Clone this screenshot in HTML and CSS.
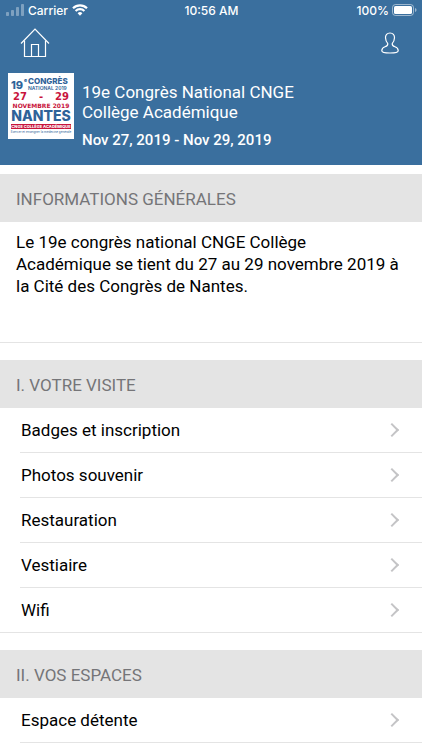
FILE: index.html
```html
<!DOCTYPE html>
<html lang="fr">
<head>
  <meta charset="UTF-8" />
  <meta name="viewport" content="width=device-width, initial-scale=1.0"/>
  <title>19e Congrès National CNGE</title>
  <link rel="stylesheet" href="styles.css">
</head>
<body>

  <!-- HEADER -->
  <header class="header">
    <div class="status-bar">
      <div class="status-left">
        <svg class="signal" width="18" height="12" viewBox="0 0 18 12" fill="#fff" fill-opacity="0.35">
          <rect x="0" y="8" width="3" height="4" rx="0.8"/>
          <rect x="5" y="6" width="3" height="6" rx="0.8"/>
          <rect x="10" y="3" width="3" height="9" rx="0.8"/>
          <rect x="15" y="0" width="3" height="12" rx="0.8"/>
        </svg>
        <span>Carrier</span>
        <svg width="16" height="12" viewBox="0 0 16 12" fill="none" stroke="#fff" stroke-width="2.2">
          <path d="M1 4.3 A10 10 0 0 1 15 4.3"/>
          <path d="M3.6 7 A6.3 6.3 0 0 1 12.4 7"/>
          <path d="M8 11.7 L5.6 9.2 A3.4 3.4 0 0 1 10.4 9.2 Z" fill="#fff" stroke="none"/>
        </svg>
      </div>
      <span>10:56 AM</span>
      <div class="status-right">
        <span>100%</span>
        <svg width="25" height="12" viewBox="0 0 25 12">
          <rect x="0.5" y="0.5" width="21" height="11" rx="3" fill="none" stroke="#fff" stroke-opacity="0.5"/>
          <rect x="2" y="2" width="18" height="8" rx="1.6" fill="#fff"/>
          <path d="M23 4 Q24.6 4.6 24.6 6 Q24.6 7.4 23 8 Z" fill="#fff" fill-opacity="0.5"/>
        </svg>
      </div>
    </div>

    <nav class="nav-bar">
      <a href="#" aria-label="Accueil">
        <svg width="30" height="30" viewBox="0 0 30 30" fill="none" stroke="#fff" stroke-width="1.2">
          <path d="M1 15.5 L15 1.2 L29 15.5"/>
          <path d="M4.5 12.5 V28.5 H25.5 V12.5"/>
          <path d="M11.5 28.5 V16.5 H18.5 V28.5"/>
        </svg>
      </a>
      <a href="#" aria-label="Profil">
        <svg width="18" height="22" viewBox="0 0 18 22" fill="none" stroke="#fff" stroke-width="1.2">
          <path d="M9 1 C6 1 4.4 3 4.5 5.8 C4.6 8.3 5.6 10.2 6.7 11.3 C7.2 13.3 6.2 14 4 14.8 C1.8 15.6 0.8 17 0.8 18.7 C0.8 20.3 3 21 9 21 C15 21 17.2 20.3 17.2 18.7 C17.2 17 16.2 15.6 14 14.8 C11.8 14 10.8 13.3 11.3 11.3 C12.4 10.2 13.4 8.3 13.5 5.8 C13.6 3 12 1 9 1 Z"/>
        </svg>
      </a>
    </nav>

    <div class="event">
      <svg class="event-logo" width="66" height="66" viewBox="0 0 66 66" role="img" aria-label="Congrès Nantes">
        <rect width="66" height="66" fill="#fff"/>
        <g class="logo-blue">
          <text x="3" y="16" font-size="11">19</text>
          <text x="16" y="9" font-size="5">e</text>
          <text x="20" y="11" font-size="8">CONGRÈS</text>
          <text class="logo-medium" x="20" y="17" font-size="5">NATIONAL 2019</text>
          <text x="33" y="48" font-size="14" text-anchor="middle">NANTES</text>
        </g>
        <g class="logo-red">
          <text x="5" y="27" font-size="10">27</text>
          <text x="33" y="27" font-size="10" text-anchor="middle">-</text>
          <text x="61" y="27" font-size="10" text-anchor="end">29</text>
          <text x="33" y="35" font-size="6" text-anchor="middle">NOVEMBRE 2019</text>
        </g>
        <rect x="3" y="51" width="60" height="5" fill="#c8143c"/>
        <text class="logo-band" x="33" y="55" font-size="4" text-anchor="middle">CNGE COLLÈGE ACADÉMIQUE</text>
        <text class="logo-small" x="33" y="60" font-size="3" text-anchor="middle">Exercer et enseigner la médecine générale</text>
      </svg>
      <div class="event-info">
        <h1>19e Congrès National CNGE Collège Académique</h1>
        <p>Nov 27, 2019 - Nov 29, 2019</p>
      </div>
    </div>
  </header>

  <!-- CONTENT -->
  <main>
    <section class="section">
      <h2>INFORMATIONS GÉNÉRALES</h2>
      <p class="intro">Le 19e congrès national CNGE Collège Académique se tient du 27 au 29 novembre 2019 à la Cité des Congrès de Nantes.</p>
    </section>

    <section class="section">
      <h2>I. VOTRE VISITE</h2>
      <ul class="menu">
        <li><a href="#">Badges et inscription</a></li>
        <li><a href="#">Photos souvenir</a></li>
        <li><a href="#">Restauration</a></li>
        <li><a href="#">Vestiaire</a></li>
        <li><a href="#">Wifi</a></li>
      </ul>
    </section>

    <section class="section">
      <h2>II. VOS ESPACES</h2>
      <ul class="menu menu-open">
        <li><a href="#">Espace détente</a></li>
        <li></li>
      </ul>
    </section>
  </main>
</body>
</html>
```
FILE: styles.css
```css
* {
  box-sizing: border-box;
}

body {
  margin: 0;
  height: 100vh;
  overflow: hidden;
  background: #fff;
  color: #000;
  font-family: Roboto, sans-serif;
  font-size: 17px;
}

h1, h2, p, ul {
  margin: 0;
  padding: 0;
  font-weight: 400;
}

svg {
  display: block;
}

/* HEADER */
.header {
  background: #3a6f9e;
  color: #fff;
  padding-bottom: 15px;
}

.status-bar {
  display: grid;
  grid-template-columns: 1fr auto 1fr;
  align-items: center;
  height: 20px;
  padding: 0 5px 0 6px;
  font-family: Inter, sans-serif;
  font-size: 12px;
  font-weight: 500;
}

.status-left, .status-right {
  display: flex;
  align-items: center;
  gap: 4px;
}

.status-right {
  justify-content: flex-end;
  gap: 3px;
}

.nav-bar {
  display: flex;
  justify-content: space-between;
  align-items: center;
  height: 46px;
  padding: 0 23px 0 20px;
}

.event {
  display: flex;
  align-items: flex-start;
  gap: 8px;
  padding: 7px 8px 0;
}

.event-logo {
  flex: none;
  font-family: Inter, sans-serif;
  font-weight: 800;
}

.logo-blue { fill: #2f6399; }
.logo-red { fill: #c8143c; font-family: "DejaVu Sans", sans-serif; }
.logo-band { fill: #fff; }
.logo-medium { font-weight: 600; }
.logo-small { fill: #2f6399; font-weight: 400; }

.event-info {
  max-width: 256px;
  padding-top: 9px;
}

.event-info h1 {
  font-size: 17px;
  line-height: 20px;
}

.event-info p {
  margin-top: 8px;
  font-size: 15px;
  font-weight: 500;
  line-height: 20px;
}

/* SECTIONS */
.section {
  margin-top: 17px;
}

.section:first-child {
  margin-top: 9px;
}

.section h2 {
  height: 48px;
  padding: 0 16px;
  background: #e4e4e4;
  color: #757578;
  font-size: 17px;
  line-height: 51px;
}

.intro {
  padding: 9px 20px 45px 16px;
  border-bottom: 1px solid #e4e4e4;
  line-height: 22px;
}

/* MENU */
.menu {
  list-style: none;
  border-bottom: 1px solid #e4e4e4;
}

.menu-open {
  border-bottom: none;
}

.menu li {
  margin-left: 20px;
}

.menu li + li {
  border-top: 1px solid #e4e4e4;
}

.menu a {
  display: flex;
  justify-content: space-between;
  align-items: center;
  height: 44px;
  padding: 0 25px 0 1px;
  color: #000;
  text-decoration: none;
}

/* chevron */
.menu a::after {
  content: "";
  width: 8px;
  height: 8px;
  border-top: 2px solid #c4c4c6;
  border-right: 2px solid #c4c4c6;
  transform: rotate(45deg);
}
```
